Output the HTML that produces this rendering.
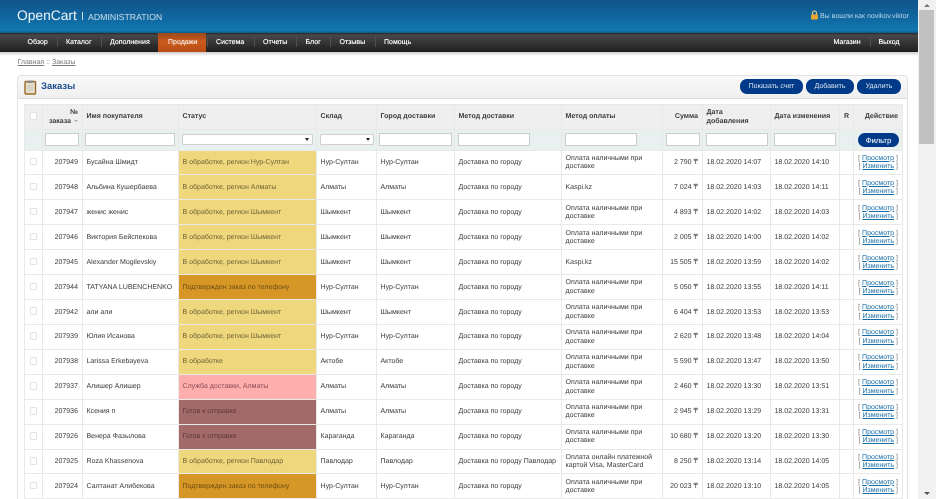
<!DOCTYPE html>
<html lang="ru">
<head>
<meta charset="utf-8">
<title>Заказы</title>
<style>
html,body{margin:0;padding:0;width:936px;height:499px;overflow:hidden;background:#fff;font-family:"Liberation Sans",Arial,sans-serif;font-size:7.02px;color:#333;text-rendering:geometricPrecision}
#page{position:absolute;left:0;top:0;width:918px;height:499px;overflow:hidden;filter:blur(.35px)}
.a{position:absolute;white-space:nowrap}
#hd{left:0;top:0;width:918px;height:33px;background:linear-gradient(#10558a 0,#10639b 45%,#1178b0 92%,#0c5c88 100%)}
#nav{left:0;top:32.5px;width:918px;height:19.5px;background:linear-gradient(#2a2a2a,#484848 12%,#3a3a3a 40%,#1e1e1e);box-sizing:border-box}
#shadow{left:0;top:52px;width:918px;height:4px;background:linear-gradient(#ccc,#fff)}
.m{top:39px;font-size:7.02px;line-height:8px;color:#fff;text-shadow:0 0 .4px #fff}
.sep{top:37px;width:1px;height:10px;background:#4f4f4f}
#act{left:158px;top:33px;width:48px;height:19px;background:linear-gradient(#9a4a1c,#cb5a1c 45%,#b84d14)}
#box{left:17px;top:75px;width:891px;height:440px;border:1px solid #e2e2e2;border-radius:4px;box-sizing:border-box;background:#fff}
#bar{left:18px;top:76px;width:889px;height:21.5px;background:linear-gradient(#f9f9f9,#efefef);border-bottom:1px solid #ddd;border-radius:3px 3px 0 0}
.b{top:79px;height:14.5px;line-height:15.5px;background:#003a88;color:#dfe8f4;border-radius:7px;text-align:center;font-size:7.02px}
table{position:absolute;left:24px;top:104px;width:878px;border-collapse:collapse;table-layout:fixed;font-size:7.02px;line-height:8.4px;color:#3a3a3a}
td{border:1px solid #e9e9e9;padding:1.5px 3.5px 0;height:24.93px;box-sizing:border-box;overflow:hidden;vertical-align:middle}
tr.h td{background:#efefef;font-weight:bold;color:#3c3c3c;height:25px;line-height:8.4px;padding-top:1px}
tr.f td{background:#e8f0f0;height:20.5px;padding:0}
.r{text-align:right;padding-right:4px}
.c{text-align:center}
.cb{display:inline-block;width:7.5px;height:7.5px;border:1px solid #e2e2e2;border-radius:1.5px;background:#fff;box-sizing:border-box;vertical-align:middle}
.y{background:#efd77e;color:#6e6235}
.o{background:#d69726;color:#6b4c14}
.p{background:#ffaeae;color:#8b4a50}
.k{background:#a36a6a;color:#5e3535}
td.l{text-align:right;color:#777;line-height:8.3px;padding:1.5px 4px 0 0}
td.l u{color:#1a6ea8}
.i{top:133px;height:13px;background:#fff;border:1px solid #c9cfcf;box-sizing:border-box}
.s{top:134px;height:11px;background:#fff;border:1px solid #d0d0d0;border-radius:2px;box-sizing:border-box}
.s i{position:absolute;right:2.5px;top:3px;width:0;height:0;border-left:2px solid transparent;border-right:2px solid transparent;border-top:3.5px solid #222}
#sb{position:absolute;left:918px;top:0;width:18px;height:499px;background:#f1f1f1}
#th{position:absolute;left:1px;top:10px;width:15px;height:134px;background:#c1c1c1}
.ar{display:inline-block;width:0;height:0;border-left:2.5px solid transparent;border-right:2.5px solid transparent;border-top:2.5px solid #aaa;vertical-align:1px;margin-left:1px}
</style>
</head>
<body>
<div id="page">
<div class="a" id="hd"></div>
<div class="a" style="left:17px;top:7px;font-size:13.8px;line-height:18px;color:#f2f7fa">OpenCart</div>
<div class="a" style="left:82px;top:12px;width:1px;height:8px;background:#cfe0ec"></div>
<div class="a" style="left:88px;top:11.5px;font-size:8.75px;line-height:10px;color:#cfe0ec">ADMINISTRATION</div>
<svg class="a" style="left:810px;top:10px" width="9" height="10" viewBox="0 0 9 10"><path d="M2.5 5V3a2 2 0 0 1 4 0v2" fill="none" stroke="#d8c98a" stroke-width="1.2"/><rect x="1" y="4.5" width="7" height="5" rx="1" fill="#eba52c"/></svg>
<div class="a" style="left:820px;top:12px;font-size:7.02px;line-height:9px;color:#bcd8ea">Вы вошли как novikov.viktor</div>

<div class="a" id="nav"></div>
<div class="a" id="act"></div>
<div class="a" id="shadow"></div>
<div class="a m" style="left:27.5px">Обзор</div><div class="a sep" style="left:57px"></div>
<div class="a m" style="left:66px">Каталог</div><div class="a sep" style="left:101px"></div>
<div class="a m" style="left:110px">Дополнения</div>
<div class="a m" style="left:168px;color:#f5e6dc">Продажи</div>
<div class="a sep" style="left:207px"></div>
<div class="a m" style="left:216px">Система</div><div class="a sep" style="left:254px"></div>
<div class="a m" style="left:263px">Отчеты</div><div class="a sep" style="left:296px"></div>
<div class="a m" style="left:305.5px">Блог</div><div class="a sep" style="left:330px"></div>
<div class="a m" style="left:339.5px">Отзывы</div><div class="a sep" style="left:375px"></div>
<div class="a m" style="left:384px">Помощь</div>
<div class="a m" style="left:833.5px">Магазин</div><div class="a sep" style="left:870px"></div>
<div class="a m" style="left:878.5px">Выход</div>

<div class="a" style="left:17.5px;top:57.5px;font-size:7.02px;line-height:9px;color:#777"><u>Главная</u> :: <u>Заказы</u></div>

<div class="a" id="box"></div>
<div class="a" id="bar"></div>
<svg class="a" style="left:24px;top:80px" width="13" height="15" viewBox="0 0 13 15"><rect x="1" y="1.5" width="10.5" height="12.5" rx="1" fill="#e6e0cc" stroke="#9a6a26" stroke-width="1.4"/><rect x="3.5" y="0.5" width="5.5" height="2.5" fill="#8a8a80"/><path d="M3.5 6h5.5M3.5 8h5.5M3.5 10h5.5" stroke="#bbb" stroke-width=".7"/></svg>
<div class="a" style="left:41px;top:81px;font-size:9.5px;line-height:12px;font-weight:bold;color:#1d4c8f">Заказы</div>
<div class="a b" style="left:740px;width:63px">Показать счет</div>
<div class="a b" style="left:806px;width:48px">Добавить</div>
<div class="a b" style="left:857px;width:44px">Удалить</div>

<table>
<colgroup><col style="width:18px"><col style="width:40px"><col style="width:96px"><col style="width:138px"><col style="width:60px"><col style="width:78px"><col style="width:107px"><col style="width:101px"><col style="width:40px"><col style="width:68px"><col style="width:69px"><col style="width:14px"><col style="width:49px"></colgroup>
<tr class="h"><td class="c" style="padding:0"><span class="cb"></span></td><td class="r">№<br>заказа <span class="ar"></span></td><td>Имя покупателя</td><td>Статус</td><td>Склад</td><td>Город доставки</td><td>Метод доставки</td><td>Метод оплаты</td><td class="r">Сумма</td><td>Дата добавления</td><td>Дата изменения</td><td style="padding:1px 0 0 4px">R</td><td class="r">Действие</td></tr>
<tr class="f"><td></td><td></td><td></td><td></td><td></td><td></td><td></td><td></td><td></td><td></td><td></td><td></td><td></td></tr>
<tr><td class="c" style="padding:0"><span class="cb"></span></td><td class="r">207949</td><td>Бусайна Шмидт</td><td class="y">В обработке, регион Нур-Султан</td><td>Нур-Султан</td><td>Нур-Султан</td><td>Доставка по городу</td><td>Оплата наличными при доставке</td><td class="r">2 790 ₸</td><td>18.02.2020 14:07</td><td>18.02.2020 14:10</td><td></td><td class="l">[ <u>Просмотр</u> ]<br>[ <u>Изменить</u> ]</td></tr>
<tr><td class="c" style="padding:0"><span class="cb"></span></td><td class="r">207948</td><td>Альбина Кушербаева</td><td class="y">В обработке, регион Алматы</td><td>Алматы</td><td>Алматы</td><td>Доставка по городу</td><td>Kaspi.kz</td><td class="r">7 024 ₸</td><td>18.02.2020 14:03</td><td>18.02.2020 14:11</td><td></td><td class="l">[ <u>Просмотр</u> ]<br>[ <u>Изменить</u> ]</td></tr>
<tr><td class="c" style="padding:0"><span class="cb"></span></td><td class="r">207947</td><td>женис женис</td><td class="y">В обработке, регион Шымкент</td><td>Шымкент</td><td>Шымкент</td><td>Доставка по городу</td><td>Оплата наличными при доставке</td><td class="r">4 893 ₸</td><td>18.02.2020 14:02</td><td>18.02.2020 14:03</td><td></td><td class="l">[ <u>Просмотр</u> ]<br>[ <u>Изменить</u> ]</td></tr>
<tr><td class="c" style="padding:0"><span class="cb"></span></td><td class="r">207946</td><td>Виктория Бейспекова</td><td class="y">В обработке, регион Шымкент</td><td>Шымкент</td><td>Шымкент</td><td>Доставка по городу</td><td>Оплата наличными при доставке</td><td class="r">2 005 ₸</td><td>18.02.2020 14:00</td><td>18.02.2020 14:02</td><td></td><td class="l">[ <u>Просмотр</u> ]<br>[ <u>Изменить</u> ]</td></tr>
<tr><td class="c" style="padding:0"><span class="cb"></span></td><td class="r">207945</td><td>Alexander Mogilevskiy</td><td class="y">В обработке, регион Шымкент</td><td>Шымкент</td><td>Шымкент</td><td>Доставка по городу</td><td>Kaspi.kz</td><td class="r">15 505 ₸</td><td>18.02.2020 13:59</td><td>18.02.2020 14:02</td><td></td><td class="l">[ <u>Просмотр</u> ]<br>[ <u>Изменить</u> ]</td></tr>
<tr><td class="c" style="padding:0"><span class="cb"></span></td><td class="r">207944</td><td>TATYANA LUBENCHENKO</td><td class="o">Подтвержден заказ по телефону</td><td>Нур-Султан</td><td>Нур-Султан</td><td>Доставка по городу</td><td>Оплата наличными при доставке</td><td class="r">5 050 ₸</td><td>18.02.2020 13:55</td><td>18.02.2020 14:11</td><td></td><td class="l">[ <u>Просмотр</u> ]<br>[ <u>Изменить</u> ]</td></tr>
<tr><td class="c" style="padding:0"><span class="cb"></span></td><td class="r">207942</td><td>али али</td><td class="y">В обработке, регион Шымкент</td><td>Шымкент</td><td>Шымкент</td><td>Доставка по городу</td><td>Оплата наличными при доставке</td><td class="r">6 404 ₸</td><td>18.02.2020 13:53</td><td>18.02.2020 13:53</td><td></td><td class="l">[ <u>Просмотр</u> ]<br>[ <u>Изменить</u> ]</td></tr>
<tr><td class="c" style="padding:0"><span class="cb"></span></td><td class="r">207939</td><td>Юлия Исанова</td><td class="y">В обработке, регион Шымкент</td><td>Нур-Султан</td><td>Нур-Султан</td><td>Доставка по городу</td><td>Оплата наличными при доставке</td><td class="r">2 620 ₸</td><td>18.02.2020 13:48</td><td>18.02.2020 14:04</td><td></td><td class="l">[ <u>Просмотр</u> ]<br>[ <u>Изменить</u> ]</td></tr>
<tr><td class="c" style="padding:0"><span class="cb"></span></td><td class="r">207938</td><td>Larissa Erkebayeva</td><td class="y">В обработке</td><td>Актобе</td><td>Актобе</td><td>Доставка по городу</td><td>Оплата наличными при доставке</td><td class="r">5 590 ₸</td><td>18.02.2020 13:47</td><td>18.02.2020 13:50</td><td></td><td class="l">[ <u>Просмотр</u> ]<br>[ <u>Изменить</u> ]</td></tr>
<tr><td class="c" style="padding:0"><span class="cb"></span></td><td class="r">207937</td><td>Алишер Алишер</td><td class="p">Служба доставки, Алматы</td><td>Алматы</td><td>Алматы</td><td>Доставка по городу</td><td>Оплата наличными при доставке</td><td class="r">2 460 ₸</td><td>18.02.2020 13:30</td><td>18.02.2020 13:51</td><td></td><td class="l">[ <u>Просмотр</u> ]<br>[ <u>Изменить</u> ]</td></tr>
<tr><td class="c" style="padding:0"><span class="cb"></span></td><td class="r">207936</td><td>Ксения п</td><td class="k">Готов к отправке</td><td>Алматы</td><td>Алматы</td><td>Доставка по городу</td><td>Оплата наличными при доставке</td><td class="r">2 945 ₸</td><td>18.02.2020 13:29</td><td>18.02.2020 13:31</td><td></td><td class="l">[ <u>Просмотр</u> ]<br>[ <u>Изменить</u> ]</td></tr>
<tr><td class="c" style="padding:0"><span class="cb"></span></td><td class="r">207926</td><td>Венера Фазылова</td><td class="k">Готов к отправке</td><td>Караганда</td><td>Караганда</td><td>Доставка по городу</td><td>Оплата наличными при доставке</td><td class="r">10 680 ₸</td><td>18.02.2020 13:20</td><td>18.02.2020 13:30</td><td></td><td class="l">[ <u>Просмотр</u> ]<br>[ <u>Изменить</u> ]</td></tr>
<tr><td class="c" style="padding:0"><span class="cb"></span></td><td class="r">207925</td><td>Roza Khassenova</td><td class="y">В обработке, регион Павлодар</td><td>Павлодар</td><td>Павлодар</td><td style="white-space:nowrap">Доставка по городу Павлодар</td><td>Оплата онлайн платежной картой Visa, MasterCard</td><td class="r">8 250 ₸</td><td>18.02.2020 13:14</td><td>18.02.2020 14:05</td><td></td><td class="l">[ <u>Просмотр</u> ]<br>[ <u>Изменить</u> ]</td></tr>
<tr><td class="c" style="padding:0"><span class="cb"></span></td><td class="r">207924</td><td>Салтанат Алибекова</td><td class="o">Подтвержден заказ по телефону</td><td>Нур-Султан</td><td>Нур-Султан</td><td>Доставка по городу</td><td>Оплата наличными при доставке</td><td class="r">20 023 ₸</td><td>18.02.2020 13:10</td><td>18.02.2020 14:05</td><td></td><td class="l">[ <u>Просмотр</u> ]<br>[ <u>Изменить</u> ]</td></tr>
</table>

<div class="a i" style="left:45px;width:34px"></div>
<div class="a i" style="left:85px;width:90px"></div>
<div class="a s" style="left:181.5px;width:131px"><i></i></div>
<div class="a s" style="left:319.5px;width:54px"><i></i></div>
<div class="a i" style="left:379px;width:73px"></div>
<div class="a i" style="left:458px;width:72px"></div>
<div class="a i" style="left:565px;width:72px"></div>
<div class="a i" style="left:666px;width:34px"></div>
<div class="a i" style="left:706px;width:62px"></div>
<div class="a i" style="left:774px;width:62px"></div>
<div class="a b" style="left:858px;top:132.5px;width:41px;height:14px;line-height:15px;font-size:7.6px;text-shadow:0 0 .4px #fff">Фильтр</div>
</div>
<div id="sb"><div id="th"></div>
<div style="position:absolute;left:6px;top:4px;width:0;height:0;border-left:3px solid transparent;border-right:3px solid transparent;border-bottom:3px solid #777"></div>
<div style="position:absolute;left:6px;top:492px;width:0;height:0;border-left:3px solid transparent;border-right:3px solid transparent;border-top:3px solid #555"></div>
</div>
</body>
</html>
